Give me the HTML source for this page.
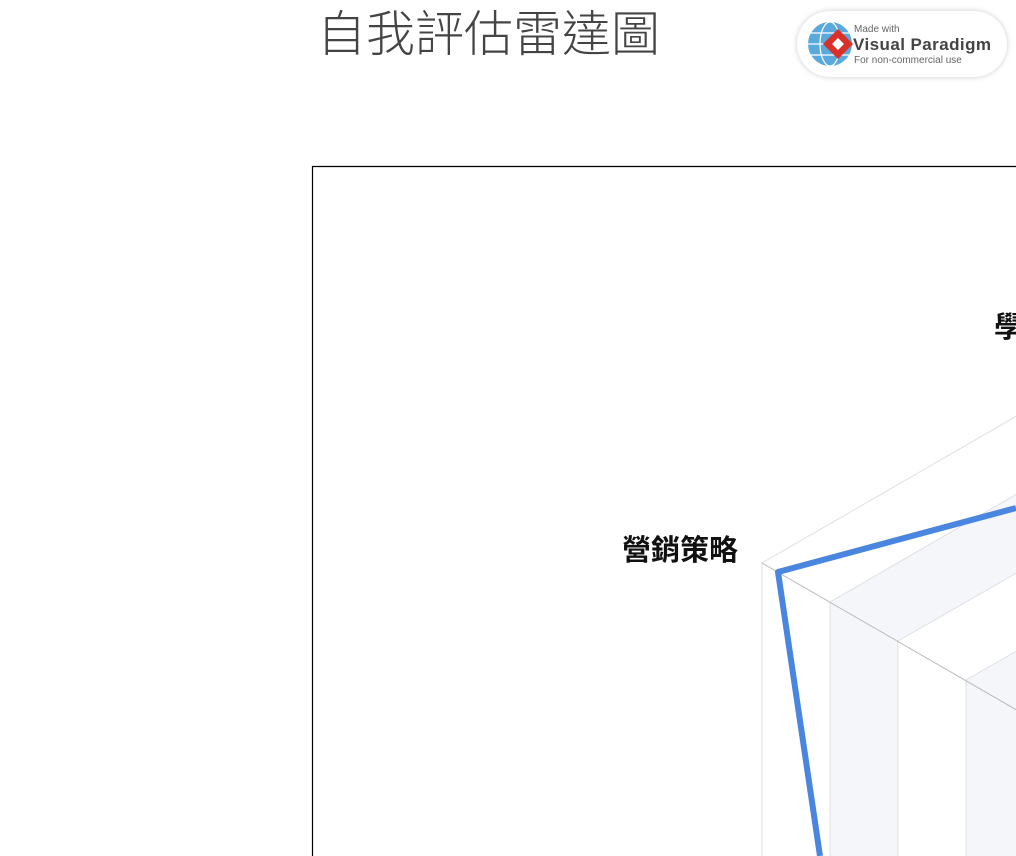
<!DOCTYPE html>
<html><head><meta charset="utf-8"><style>
body{margin:0;width:1016px;height:856px;overflow:hidden;background:#fff;position:relative;font-family:"Liberation Sans","Noto Sans CJK TC",sans-serif}
.t{position:absolute;left:317px;top:-5px;font-size:49px;color:#444;font-weight:300;letter-spacing:0px;font-family:"Noto Sans CJK TC",sans-serif;white-space:nowrap}
.badge{position:absolute;left:797px;top:11px;width:210px;height:66px;border-radius:33px;background:#fff;box-shadow:0 0 6px rgba(0,0,0,.2)}
</style></head><body>
<div class="t">自我評估雷達圖</div>
<div class="badge">
<svg width="210" height="66" viewBox="0 0 210 66">
<circle cx="33" cy="33" r="22" fill="#5aa9dd"/>
<g stroke="#fff" stroke-width="1.2" fill="none"><ellipse cx="33" cy="33" rx="10" ry="22"/><line x1="11" y1="33" x2="55" y2="33"/><line x1="14" y1="22" x2="52" y2="22"/><line x1="14" y1="44" x2="52" y2="44"/></g>
<path d="M41 18 L56 33 L41 48 L26 33Z" fill="#d9302a"/>
<path d="M41 27 L47 33 L41 39 L35 33Z" fill="#fff"/>
<text x="57" y="21" font-size="10" fill="#666">Made with</text>
<text x="56" y="39" font-size="17" font-weight="bold" fill="#444" textLength="138">Visual Paradigm</text>
<text x="57" y="52" font-size="10" fill="#666">For non-commercial use</text>
</svg></div>
<svg style="position:absolute;left:0;top:0" width="1016" height="856">
<path d="M312.5 856 V166.5 H1016" fill="none" stroke="#000" stroke-width="1.2"/>
<path d="M830 602 V856 H898 V641 Z" fill="#f5f6fa"/>
<path d="M966 680 V856 H1034 V720 Z" fill="#f5f6fa"/>
<path d="M830 602 L1034 484 L1034 563 L898 641Z" fill="#f5f6fa"/>
<path d="M966 680 L1034 641 L1034 720Z" fill="#f5f6fa"/>
<g fill="none" stroke="#dde0e6" stroke-width="1">
<path d="M762 856 V563 L1034 406"/>
<path d="M830 856 V602 L1034 484"/>
<path d="M898 856 V641 L1034 563"/>
<path d="M966 856 V680 L1034 641"/>
</g>
<line x1="762" y1="563" x2="1034" y2="720" stroke="#bbb" stroke-width="1"/>
<path d="M820 856 L778 572 L1016 508" fill="none" stroke="#4a86e0" stroke-width="6" stroke-linejoin="round"/>
<text x="622" y="560" font-size="29" font-weight="bold" fill="#111" font-family="Noto Sans CJK TC,sans-serif">營銷策略</text>
<text x="994" y="337" font-size="29" font-weight="bold" fill="#111" font-family="Noto Sans CJK TC,sans-serif">學</text>
</svg>
</body></html>
